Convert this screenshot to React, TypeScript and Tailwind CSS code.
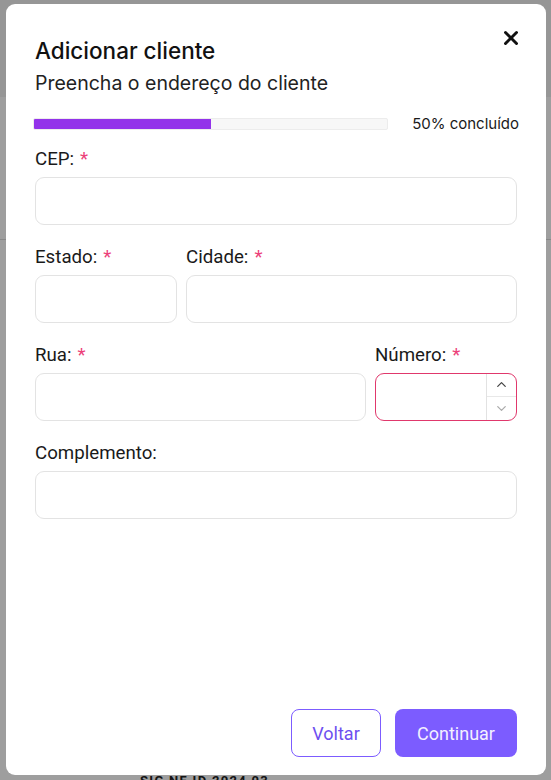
import { X, ChevronUp, ChevronDown } from 'lucide-react'

function Label({ text, required }: { text: string; required?: boolean }) {
    return (
        <label className="block h-[24px] text-[18.7px] leading-[24px] text-[#1a1a1a] mb-[6px]">
            {text}
            {required && <span className="ml-[6px] text-[#ec4079]">*</span>}
        </label>
    )
}

function Field({ label, required, className = '' }: { label: string; required?: boolean; className?: string }) {
    return (
        <div className={className}>
            <Label text={label} required={required} />
            <input className="block h-[48px] w-full rounded-[9px] border border-[#e3e3e3] bg-white px-3 text-[16px] outline-none" />
        </div>
    )
}

export default function App() {
    return (
        <div className="relative h-[780px] w-[551px] overflow-hidden bg-white" style={{ fontFamily: 'Roboto, "Noto Sans", sans-serif' }}>
            {/* page behind */}
            <div className="h-[97px] bg-[#f3f3f3]" />
            <div className="h-[143px] border-b border-[#dcdcdc]" />
            <div className="pt-[531px] pl-[140px] text-[13px] font-bold tracking-widest text-[#222]">SIG NF ID 2024 03</div>

            {/* overlay */}
            <div className="absolute inset-0 bg-black/[0.38]" />

            {/* modal */}
            <div className="absolute left-[6px] top-[4px] flex h-[771px] w-[540px] flex-col rounded-[9px] bg-white px-[29px] pb-[18px] pt-[33px]">
                <button className="absolute right-[24px] top-[23px] text-[#111]">
                    <X size={22} strokeWidth={3.2} />
                </button>

                <div style={{ fontFamily: 'Inter, "Noto Sans", sans-serif' }}>
                    <h2 className="text-[22.5px] font-medium leading-[28px] text-[#111]">Adicionar cliente</h2>
                    <p className="mt-[5px] text-[19.5px] leading-[26px] text-[#222]">Preencha o endereço do cliente</p>
                </div>

                <div className="mt-[17px] flex items-center">
                    <div className="h-[12px] w-[355px] overflow-hidden rounded-[2px] border border-[#ececec] bg-[#f7f7f7] -ml-[2px]">
                        <div className="h-full w-1/2 bg-[#9333ea]" />
                    </div>
                    <span className="ml-auto text-[15px] text-[#1a1a1a] -mr-[2px]" style={{ fontFamily: 'Inter, "Noto Sans", sans-serif' }}>
                        50% concluído
                    </span>
                </div>

                <div className="mt-[11px] flex flex-col gap-[20px]">
                    <Field label="CEP:" required />
                    <div className="flex gap-[9px]">
                        <Field label="Estado:" required className="w-[142px]" />
                        <Field label="Cidade:" required className="flex-1" />
                    </div>
                    <div className="flex gap-[9px]">
                        <Field label="Rua:" required className="flex-1" />
                        <div className="w-[142px]">
                            <Label text="Número:" required />
                            <div className="flex h-[48px] w-full overflow-hidden rounded-[9px] border border-[#e0386c] bg-white">
                                <input className="min-w-0 flex-1 px-3 text-[16px] outline-none" />
                                <div className="flex w-[30px] flex-col border-l border-[#e2e2e2]">
                                    <div className="flex flex-1 items-center justify-center border-b border-[#e8e8e8] text-[#444]">
                                        <ChevronUp size={15} strokeWidth={2} />
                                    </div>
                                    <div className="flex flex-1 items-center justify-center text-[#aaa]">
                                        <ChevronDown size={15} strokeWidth={2} />
                                    </div>
                                </div>
                            </div>
                        </div>
                    </div>
                    <Field label="Complemento:" />
                </div>

                <div className="mt-auto flex justify-end gap-[14px]">
                    <button className="h-[48px] w-[90px] rounded-[8px] border border-[#7c5cff] bg-white text-[18px] text-[#6d4ff0]">Voltar</button>
                    <button className="h-[48px] w-[122px] rounded-[8px] bg-[#7c5cff] text-[18px] text-[#f3f0ff]">Continuar</button>
                </div>
            </div>
        </div>
    )
}
